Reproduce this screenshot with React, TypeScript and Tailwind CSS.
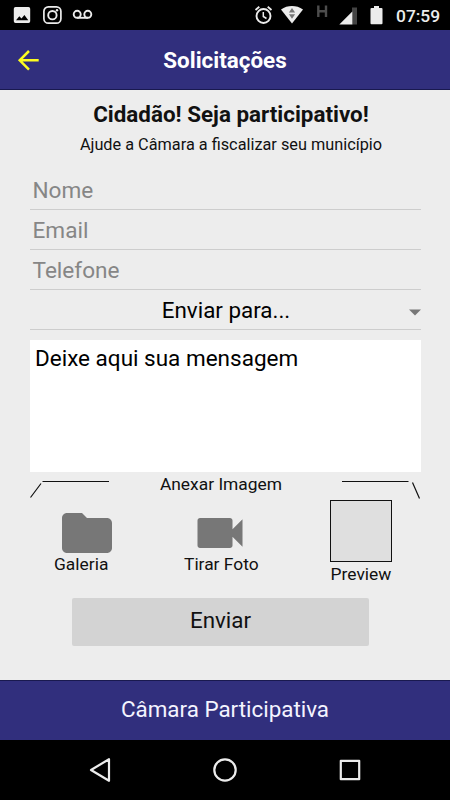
import type { ReactNode } from "react";

const FIELDS = ["Nome", "Email", "Telefone"];

function StatusBar() {
  return (
    <div className="flex h-[30px] items-center justify-between bg-black text-[#ececec]">
      {/* Notifications */}
      <svg width="100" height="30" viewBox="0 0 100 30" fill="none">
        <path
          fill="currentColor"
          fillRule="evenodd"
          d="M15.500 7h13a1.700 1.700 0 0 1 1.700 1.700v12.600a1.700 1.700 0 0 1-1.700 1.700h-13a1.700 1.700 0 0 1-1.700-1.700V8.700a1.700 1.700 0 0 1 1.700-1.700zM16 20.300h12.300l-3.900-5.400-2.900 3.700-2.200-2.300z"
        />
        <rect x="43.9" y="6.8" width="17" height="16.4" rx="4.5" stroke="currentColor" strokeWidth="1.7" />
        <circle cx="52.4" cy="15.2" r="4.2" stroke="currentColor" strokeWidth="1.9" />
        <circle cx="57" cy="10.3" r="1.2" fill="currentColor" />
        <circle cx="77.2" cy="14.3" r="3.5" stroke="currentColor" strokeWidth="1.9" />
        <circle cx="87.8" cy="14.3" r="3.5" stroke="currentColor" strokeWidth="1.9" />
        <path d="M77.200 17.800h10.600" stroke="currentColor" strokeWidth="1.9" />
      </svg>
      {/* System icons */}
      <div className="flex items-center">
        <svg width="144" height="30" viewBox="250 0 144 30" fill="none">
          <circle cx="263.500" cy="16" r="7" stroke="currentColor" strokeWidth="1.9" />
          <path d="M263.300 12v4.500l3.200 2" stroke="currentColor" strokeWidth="1.5" />
          <path d="M255.500 10l3.800-3.200M271.500 10l-3.800-3.200" stroke="currentColor" strokeWidth="1.8" />
          <path fill="currentColor" d="M281 9.500C287.500 4.900 296.500 4.900 303 9.500L292 23.500z" />
          <path fill="#777" d="M292 8l3.100 4.500h-6.200zM292 18.800l-3.100-4.500h6.200z" />
          <path d="M318.300 5.500v11.500M326 5.500v11.500M318.300 11.200h7.700" stroke="#4d4d4d" strokeWidth="2.4" />
          <path fill="#444" d="M352 12V7.500h5V24.500h-5z" />
          <path fill="currentColor" d="M339.300 24.500L352.300 11.500v13z" />
          <path fill="currentColor" d="M374 6h5v2h2.500a1 1 0 0 1 1 1v14.300a1 1 0 0 1-1 1h-10a1 1 0 0 1-1-1V9a1 1 0 0 1 1-1h2.500z" />
        </svg>
        <span className="w-[56px] pt-[3px] pl-[2px] text-[17.4px] leading-none font-medium">07:59</span>
      </div>
    </div>
  );
}

function Attachment({ label, path, className }: { label: string; path: string; className: string }) {
  return (
    <button className={className}>
      <svg className="h-[60px] w-[60px] fill-[#777]" viewBox="0 0 24 24">
        <path d={path} />
      </svg>
      <span className="-mt-[9px] block whitespace-nowrap text-[17.4px] leading-5">{label}</span>
    </button>
  );
}

function Underlined({ children }: { children: ReactNode }) {
  return <div className="h-10 border-b border-[#cdcdcd] text-[22.4px] leading-[41px]">{children}</div>;
}

export default function App() {
  return (
    <div className="flex h-[800px] w-[450px] flex-col bg-[#ededed] font-['Roboto',sans-serif] text-[#111]">
      <StatusBar />

      {/* Header */}
      <header className="grid h-[60px] grid-cols-[50px_1fr_50px] items-center border-b border-[#19194f] bg-[#312f7d]">
        <svg className="ml-[17px]" width="24" height="24" viewBox="0 0 24 24" fill="none" stroke="#fcfc20" strokeWidth="2.5">
          <path d="M21.700 12.300H2.700M12 3l-9.300 9.300 9.300 9.300" />
        </svg>
        <h1 className="pt-[2px] text-center text-[22.4px] font-bold text-white">Solicitações</h1>
      </header>

      <main className="h-[590px] px-[30px] pr-[29px]">
        <div className="h-[80px] pt-[10px] pl-[11px] text-center">
          <h2 className="text-[22.4px] leading-[29px] font-bold">Cidadão! Seja participativo!</h2>
          <p className="pt-[5px] text-[16.3px] leading-[21px]">Ajude a Câmara a fiscalizar seu município</p>
        </div>

        {/* Form fields */}
        {FIELDS.map((name) => (
          <Underlined key={name}>
            <span className="pl-[2.5px] text-[22.6px] text-[#868686]">{name}</span>
          </Underlined>
        ))}
        <Underlined>
          <div className="flex items-center text-black">
            <span className="flex-1 pl-[13px] text-center">Enviar para...</span>
            <svg className="mt-[3px]" width="12" height="7" viewBox="0 0 12 7">
              <path d="M0 .5h12l-6 6z" fill="#777" />
            </svg>
          </div>
        </Underlined>
        <div className="mt-[10px] h-[132px] bg-white px-[5px] text-[22.5px] leading-[37px] text-black">
          Deixe aqui sua mensagem
        </div>

        {/* Attachments */}
        <div className="flex h-[28px] justify-between">
          <svg width="80" height="28" viewBox="0 0 80 28" fill="none" stroke="#111" strokeWidth="1.2">
            <path d="M.5 25.500L11 11.500M12.500 9.500H79" />
          </svg>
          <span className="-ml-[9px] text-[17.4px] leading-[25px]">Anexar Imagem</span>
          <svg width="80" height="28" viewBox="0 0 80 28" fill="none" stroke="#111" strokeWidth="1.2">
            <path d="M1 9.500H67.500M71.500 10.500L78.500 26.500" />
          </svg>
        </div>
        <div className="flex h-[98px] items-start">
          <Attachment
            label="Galeria"
            className="mt-[3px] ml-[24px] w-[65px] text-left [&>svg]:ml-[2.5px]"
            path="M10 4H4c-1.100 0-1.990.900-1.990 2L2 18c0 1.100.900 2 2 2h16c1.100 0 2-.900 2-2V8c0-1.100-.900-2-2-2h-8l-2-2z"
          />
          <Attachment
            label="Tirar Foto"
            className="mt-[3px] ml-[65px] w-[76px] text-left [&>svg]:ml-[5.5px]"
            path="M17 10.500V7c0-.550-.450-1-1-1H4c-.550 0-1 .450-1 1v10c0 .550.450 1 1 1h12c.550 0 1-.450 1-1v-3.500l4 4v-11l-4 4z"
          />
          <div className="ml-[70px] w-[62px] text-center">
            <div className="h-[62px] border border-[#111] bg-[#dfdfdf]" />
            <span className="block pt-[2px] text-[17.4px] leading-5">Preview</span>
          </div>
        </div>
        <button className="ml-[42px] block h-[48px] w-[297px] rounded-[2px] bg-[#d3d3d3] pb-[3px] text-[22.4px]">Enviar</button>
      </main>

      <footer className="flex h-[60px] items-center justify-center border-t border-[#19194f] bg-[#312f7d] pb-[2px] text-[22.4px] text-[#f4f4ff]">
        Câmara Participativa
      </footer>

      {/* Navigation bar */}
      <nav className="flex h-[60px] items-center justify-center bg-black">
        <svg width="280" height="30" viewBox="85 755 280 30" fill="none" stroke="#ececec" strokeWidth="2.2" strokeLinejoin="round">
          <path d="M91 770l18-10.800v21.600z" />
          <circle cx="225" cy="770" r="10.700" />
          <rect x="340.800" y="760.800" width="18.400" height="18.400" />
        </svg>
      </nav>
    </div>
  );
}
